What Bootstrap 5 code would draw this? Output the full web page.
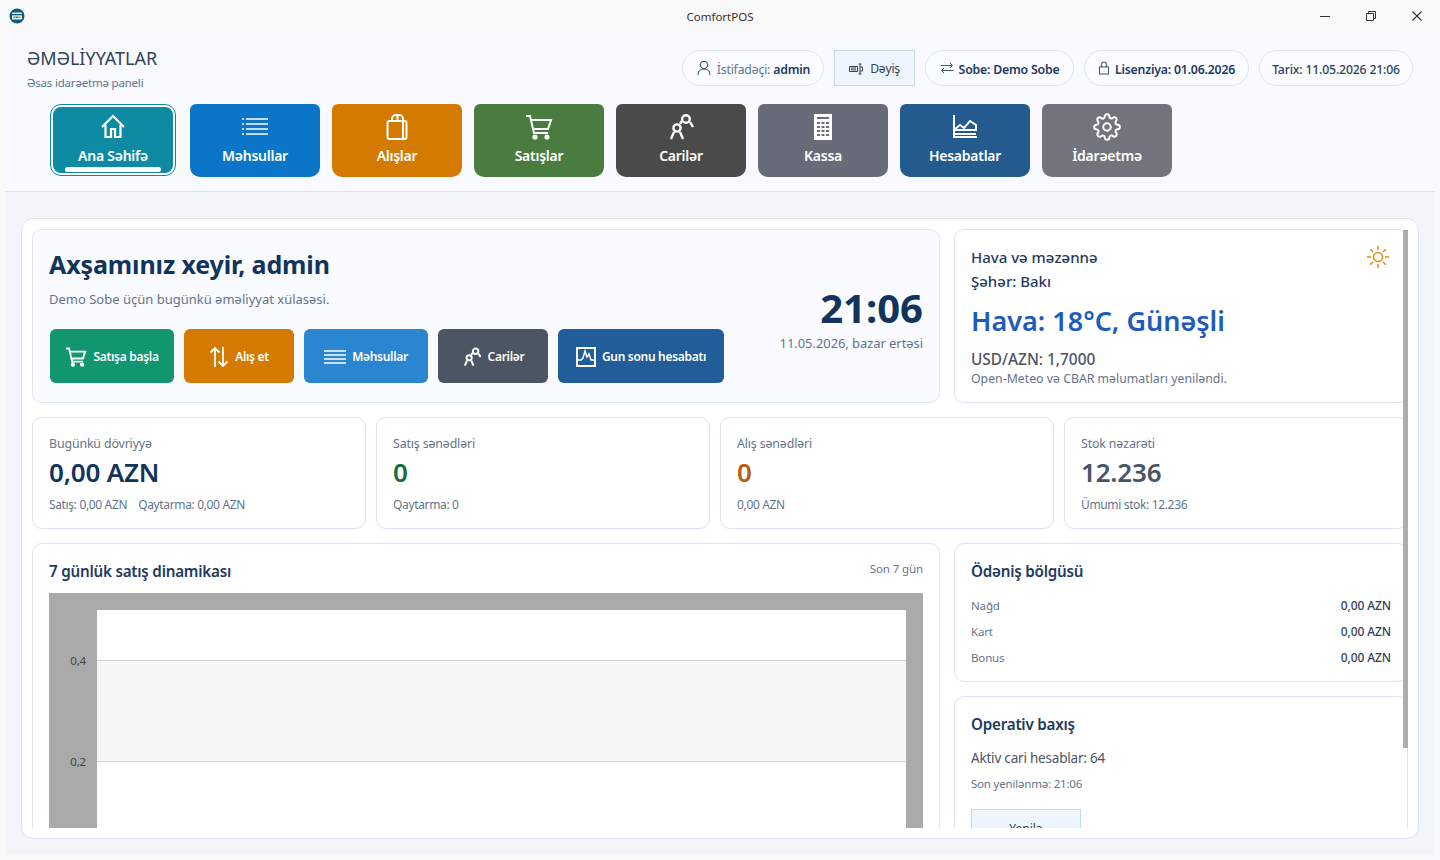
<!DOCTYPE html>
<html lang="en">
<head>
  <meta charset="UTF-8" />
  <title>ComfortPOS</title>
  <link rel="stylesheet" href="https://cdn.jsdelivr.net/npm/bootstrap@5.3.0/dist/css/bootstrap.min.css">
  <style>
    html, body { height: 860px; overflow: hidden; }
    body { font-family: "Noto Sans", "Open Sans", sans-serif; background: #f9f9f9; color: #334155; font-size: 13px; }
    .win-bar { height: 32px; position: relative; }
    .win-ico { position: absolute; left: 9px; top: 8px; }
    .win-title { font-size: 11.5px; color: #333; width: 100%; text-align: center; padding-top: 2px; }
    .win-ctl { position: absolute; right: 0; top: 0; height: 32px; }
    .win-ctl span { width: 46px; height: 32px; display: flex; align-items: center; justify-content: center; }
    .app { margin: 0 5px; height: 823px; background: #f3f5f9; }
    .top-area { background: #f8faff; height: 160px; border-bottom: 1px solid #dde4ee; }
    .head-row { padding: 14px 22px 0 22px; height: 72px; }
    .page-title { font-size: 18px; line-height: 24px; color: #334155; }
    .page-sub { font-size: 11.5px; line-height: 16px; color: #64748b; margin-top: 5px; letter-spacing: -.2px; }
    .pill-row { gap: 10px; margin-top: 4px; }
    .info-pill { height: 36px; border: 1px solid #dbe5f1; border-radius: 18px; background: #fbfcff; padding-top: 4px; font-size: 12.3px; letter-spacing: -.2px; color: #334155; gap: 5px; white-space: nowrap; }
    .info-pill svg { margin-top: -4px; }
    .info-pill .lbl { color: #64748b; }
    .info-pill b { font-weight: 600; color: #1e3a5f; }
    .pill-user { width: 142px; }
    .pill-shop { width: 149px; }
    .pill-lic { width: 165px; }
    .pill-when { width: 154px; }
    .pill-date { font-weight: 500; }
    .swap-btn { height: 36px; width: 81px; border: 1px solid #c9d9ea; background: #eef5fd; font-size: 12.2px; color: #334155; gap: 7px; letter-spacing: -.25px; padding-top: 2px; }
    .mod-row { padding-left: 45px; gap: 12px; height: 73px; }
    .mod-btn { width: 130px; height: 73px; color: #fff; border-radius: 6px 6px 10px 10px; font-size: 14px; font-weight: 600; letter-spacing: -.25px; gap: 5px; padding-top: 9px; line-height: 20px; }
    .mod-btn svg { width: 28px; height: 28px; }
    .mod-home { width: 124px; height: 70px; margin: 1px 3px 0 1px; background: #0e8ba3; border-radius: 10px; outline: 1px solid #0e8ba3; border: 2px solid #fff; position: relative; padding-top: 6px; }
    .mod-home::after { content: ""; position: absolute; left: 12px; right: 12px; bottom: 1px; height: 5px; border-radius: 3px; background: #fff; }
    .bg-blue-ish { background: #0b76c8; }
    .bg-amber-ish { background: #d57a00; }
    .bg-green-ish { background: #4a7c3f; }
    .bg-coal-ish { background: #4a4a4a; }
    .bg-slate-ish { background: #686b78; }
    .bg-navy-ish { background: #235b8e; }
    .bg-steel-ish { background: #71747d; }
    .outer-box { margin: 26px 16px 0 16px; height: 621px; background: #fff; border: 1px solid #dbe4ef; border-radius: 12px; padding: 10px; }
    .scroll-clip { height: 599px; overflow: hidden; position: relative; }
    .scroll-thumb { position: absolute; right: 0; top: 1px; width: 5px; height: 518px; background: #adadad; z-index: 3; }
    .main-grid { display: grid; grid-template-columns: 908px 454px; column-gap: 14px; }
    .panel { border: 1px solid #dde5f0; border-radius: 10px; background: #fff; }
    .hero { height: 174px; background: #f9fbff; padding: 16px; position: relative; }
    .hero h1 { font-size: 25px; font-weight: 700; color: #12345b; margin: 0; line-height: 36px; letter-spacing: -.12px; }
    .hero p { font-size: 13px; color: #64748b; margin: 8px 0 0; line-height: 18px; }
    .hero-acts { gap: 10px; margin: 21px 0 0 1px; }
    .act-btn { height: 54px; border-radius: 6px; color: #fff; font-size: 12px; font-weight: 600; gap: 6px; letter-spacing: -.3px; padding-top: 1px; }
    .act-w110 { width: 110px; }
    .act-w124 { width: 124px; }
    .act-w166 { width: 166px; }
    .hero-clock { position: absolute; right: 16px; top: 54px; text-align: right; }
    .clock-big { font-size: 40px; font-weight: 700; color: #12345b; line-height: 48px; }
    .clock-date { font-size: 13px; color: #64748b; line-height: 18px; margin-top: 2px; letter-spacing: -.07px; }
    .act-green { background: #12966f; }
    .act-blue { background: #2a86d0; }
    .act-slate { background: #4b5563; }
    .act-navy { background: #205d99; }
    .weather { height: 174px; padding: 15px 16px 16px; position: relative; }
    .weather .w1 { font-size: 15px; font-weight: 500; color: #1e3a5f; line-height: 24px; }
    .weather .w2 { font-size: 27px; font-weight: 600; color: #1f5bbd; line-height: 36px; margin-top: 10px; }
    .weather .w3 { font-size: 15.4px; font-weight: 500; color: #4b5563; line-height: 20px; margin-top: 11px; }
    .weather .w4 { font-size: 12.3px; color: #64748b; line-height: 18px; }
    .sun-ico { position: absolute; right: 17px; top: 15px; }
    .kpi-row { display: grid; grid-template-columns: 334px 334px 334px 344px; column-gap: 10px; margin: 14px 0; grid-column: 1 / -1; }
    .kpi { height: 112px; padding: 17px 16px 16px; }
    .kpi-cap { font-size: 12.4px; color: #64748b; line-height: 18px; letter-spacing: -.15px; }
    .kpi-num { font-size: 26px; font-weight: 600; line-height: 34px; margin-top: 2px; color: #12345b; letter-spacing: -.2px; }
    .kpi-foot { font-size: 12px; color: #64748b; line-height: 16px; margin-top: 8px; letter-spacing: -.35px; }
    .kpi-foot span + span { margin-left: 11px; }
    .tone-green { color: #146c43; }
    .tone-amber { color: #b45f10; }
    .tone-gray { color: #475569; }
    .chart-panel { height: 400px; padding: 16px; }
    .chart-head { height: 33px; }
    .chart-title { font-size: 15.2px; font-weight: 600; color: #1e3a5f; line-height: 22px; letter-spacing: -.22px; }
    .chart-note { font-size: 11.5px; color: #64748b; letter-spacing: -.1px; }
    .chart-gray { background: #aaa; height: 300px; padding: 17px 17px 0 48px; }
    .plot { background: #fff; height: 283px; position: relative; }
    .plot-band { position: absolute; left: 0; right: 0; top: 50px; height: 102px; background: #f7f7f7; border-top: 1px solid #d4d4d4; border-bottom: 1px solid #d4d4d4; }
    .tick { position: absolute; right: calc(100% + 11px); font-size: 11.5px; color: #444; line-height: 16px; letter-spacing: -.2px; }
    .tick-hi { top: 43px; }
    .tick-lo { top: 144px; }
    .side-stack { display: flex; flex-direction: column; gap: 14px; }
    .pay-panel { height: 139px; padding: 16px; }
    .pay-line { height: 26px; font-size: 11.5px; color: #64748b; letter-spacing: -.15px; }
    .pay-line b { font-weight: 500; color: #334155; font-size: 12px; letter-spacing: -.1px; }
    .pay-rows { margin-top: 11px; }
    .oper-panel { height: 200px; padding: 16px; }
    .oper-line { font-size: 13.5px; color: #4b5563; line-height: 20px; margin-top: 13px; letter-spacing: -.2px; }
    .oper-sub { font-size: 11.5px; color: #64748b; line-height: 16px; margin-top: 8px; letter-spacing: -.2px; }
    .refresh-btn { width: 110px; height: 40px; border: 1px solid #c9d9ea; background: #eef5fd; font-size: 12px; color: #334155; margin-top: 17px; display: flex; justify-content: center; align-items: center; }
  </style>
</head>
<body>

<!-- Window bar -->
<div class="win-bar d-flex align-items-center">
  <svg class="win-ico" width="16" height="16" viewBox="0 0 16 16"><circle cx="8" cy="8" r="7.5" fill="#0f5c7a"/><rect x="3" y="4.5" width="10" height="7" rx="1" fill="#e8f4f8"/><rect x="3" y="6" width="10" height="1.3" fill="#0f5c7a"/><rect x="4.5" y="8.5" width="2" height="1.5" fill="#2a86d0"/><rect x="7" y="8.5" width="2" height="1.5" fill="#12966f"/><rect x="9.5" y="8.5" width="2" height="1.5" fill="#d57a00"/></svg>
  <div class="win-title">ComfortPOS</div>
  <div class="win-ctl d-flex">
    <span><svg width="12" height="12" viewBox="0 0 12 12"><path d="M1 6.5h10" stroke="#333" fill="none"/></svg></span>
    <span><svg width="12" height="12" viewBox="0 0 12 12"><path d="M1.5 3.5h7v7h-7zM3.5 3.5v-2h7v7h-2" stroke="#333" fill="none"/></svg></span>
    <span><svg width="12" height="12" viewBox="0 0 12 12"><path d="M1.5 1.5l9 9M10.5 1.5l-9 9" stroke="#333" stroke-width="1.1" fill="none"/></svg></span>
  </div>
</div>

<div class="app">
  <div class="top-area">
    <div class="head-row d-flex justify-content-between">
      <div>
        <div class="page-title">ƏMƏLİYYATLAR</div>
        <div class="page-sub">Əsas idarəetmə paneli</div>
      </div>
      <div class="pill-row d-flex align-items-start">
        <div class="info-pill pill-user d-flex align-items-center justify-content-center">
          <svg width="16" height="16" viewBox="0 0 16 16" fill="none" stroke="#475a78" stroke-width="1.1"><circle cx="8" cy="5" r="3.6"/><path d="M2 15c0-4 2.5-6 6-6s6 2 6 6"/></svg>
          <span><span class="lbl">İstifadəçi:</span> <b>admin</b></span>
        </div>
        <div class="swap-btn d-flex align-items-center justify-content-center">
          <svg width="14" height="12" viewBox="0 0 14 12" fill="none" stroke="#334155"><path d="M.5 3.5h8v5h-8zM2 5h5M2 6.8h5M11 1v10M9.500 1h3M9.500 11h3M11 4h2.500v4H11"/></svg>
          <span>Dəyiş</span>
        </div>
        <div class="info-pill pill-shop d-flex align-items-center justify-content-center">
          <svg width="14" height="12" viewBox="0 0 14 12" fill="none" stroke="#475a78"><path d="M.5 3.5h12M10 1l2.500 2.500L10 6M13.500 8.500h-12M4 6L1.500 8.500 4 11"/></svg>
          <b>Sobe: Demo Sobe</b>
        </div>
        <div class="info-pill pill-lic d-flex align-items-center justify-content-center">
          <svg width="12" height="14" viewBox="0 0 12 14" fill="none" stroke="#475a78" stroke-width="1.1"><rect x="1.500" y="6" width="9" height="7"/><path d="M3.500 6V3.500a2.500 2.500 0 0 1 5 0V6"/></svg>
          <b>Lisenziya: 01.06.2026</b>
        </div>
        <div class="info-pill pill-when d-flex align-items-center justify-content-center">
          <span class="pill-date">Tarix: 11.05.2026 21:06</span>
        </div>
      </div>
    </div>
    <div class="mod-row d-flex">
      <div class="mod-btn mod-home d-flex flex-column align-items-center">
        <svg viewBox="0 0 28 28" fill="none" stroke="#fff" stroke-width="2.200"><path d="M3 14L14 3l11 11M6.500 12v12h5.500v-8h4v8h5.500V12"/></svg>
        <span>Ana Səhifə</span>
      </div>
      <div class="mod-btn bg-blue-ish d-flex flex-column align-items-center">
        <svg viewBox="0 0 28 28" fill="none" stroke="#fff" stroke-width="1.700"><path d="M1 6h2M5 6h22M1 11h2M5 11h22M1 16h2M5 16h22M1 21h2M5 21h22"/></svg>
        <span>Məhsullar</span>
      </div>
      <div class="mod-btn bg-amber-ish d-flex flex-column align-items-center">
        <svg viewBox="0 0 28 28" fill="none" stroke="#fff" stroke-width="2"><rect x="4.500" y="8" width="19" height="18" rx="2"/><path d="M20 8v18M9 8V6a4 4 0 0 1 4-4h3a4 4 0 0 1 4 4v2M14.500 2.500V8"/></svg>
        <span>Alışlar</span>
      </div>
      <div class="mod-btn bg-green-ish d-flex flex-column align-items-center">
        <svg viewBox="0 0 28 28" fill="none" stroke="#fff" stroke-width="2"><path d="M1 3h4l4 17h14M6 7h20l-3 9H8"/><circle cx="10" cy="24" r="1.600" fill="#fff"/><circle cx="22" cy="24" r="1.600" fill="#fff"/></svg>
        <span>Satışlar</span>
      </div>
      <div class="mod-btn bg-coal-ish d-flex flex-column align-items-center">
        <svg viewBox="0 0 28 28" fill="none" stroke="#fff" stroke-width="2.400"><circle cx="19" cy="6" r="3.800"/><circle cx="10" cy="15" r="3.600"/><path d="M4 26l3-7M16 26l-3-7M23 9l3 5M15 8l-2 3"/></svg>
        <span>Carilər</span>
      </div>
      <div class="mod-btn bg-slate-ish d-flex flex-column align-items-center">
        <svg viewBox="0 0 28 28"><rect x="5" y="1" width="18" height="26" fill="#fff"/><rect x="8" y="4" width="12" height="2" fill="#686b78"/><g fill="#686b78"><rect x="8" y="9" width="3" height="2"/><rect x="12.500" y="9" width="3" height="2"/><rect x="17" y="9" width="3" height="2"/><rect x="8" y="13" width="3" height="2"/><rect x="12.500" y="13" width="3" height="2"/><rect x="17" y="13" width="3" height="2"/><rect x="8" y="17" width="3" height="2"/><rect x="12.500" y="17" width="3" height="2"/><rect x="17" y="17" width="3" height="2"/><rect x="8" y="21" width="3" height="2"/><rect x="12.500" y="21" width="3" height="2"/><rect x="17" y="21" width="3" height="2"/></g></svg>
        <span>Kassa</span>
      </div>
      <div class="mod-btn bg-navy-ish d-flex flex-column align-items-center">
        <svg viewBox="0 0 28 28" fill="none" stroke="#fff" stroke-width="2"><path d="M3 2v22h23M3 17l6-5 4 3 6-7 6 4v5H3M3 21h22"/></svg>
        <span>Hesabatlar</span>
      </div>
      <div class="mod-btn bg-steel-ish d-flex flex-column align-items-center">
        <svg viewBox="0 0 24 24" fill="none" stroke="#fff" stroke-width="1.700"><circle cx="12" cy="12" r="3.200"/><path d="M19.400 15a1.650 1.650 0 0 0 .33 1.820l.06.06a2 2 0 0 1 0 2.830 2 2 0 0 1-2.830 0l-.06-.06a1.650 1.650 0 0 0-1.820-.33 1.650 1.650 0 0 0-1 1.510V21a2 2 0 0 1-2 2 2 2 0 0 1-2-2v-.09A1.650 1.650 0 0 0 9 19.400a1.650 1.650 0 0 0-1.820.33l-.06.06a2 2 0 0 1-2.830 0 2 2 0 0 1 0-2.830l.06-.06a1.650 1.650 0 0 0 .33-1.820 1.650 1.650 0 0 0-1.510-1H3a2 2 0 0 1-2-2 2 2 0 0 1 2-2h.09A1.650 1.650 0 0 0 4.600 9a1.650 1.650 0 0 0-.33-1.820l-.06-.06a2 2 0 0 1 0-2.830 2 2 0 0 1 2.830 0l.06.06a1.650 1.650 0 0 0 1.820.33H9a1.650 1.650 0 0 0 1-1.510V3a2 2 0 0 1 2-2 2 2 0 0 1 2 2v.09a1.650 1.650 0 0 0 1 1.510 1.650 1.650 0 0 0 1.820-.33l.06-.06a2 2 0 0 1 2.830 0 2 2 0 0 1 0 2.830l-.06.06a1.650 1.650 0 0 0-.33 1.820V9a1.650 1.650 0 0 0 1.510 1H21a2 2 0 0 1 2 2 2 2 0 0 1-2 2h-.09a1.650 1.650 0 0 0-1.510 1z"/></svg>
        <span>İdarəetmə</span>
      </div>
    </div>
  </div>

  <div class="outer-box">
    <div class="scroll-clip">
      <div class="scroll-thumb"></div>
      <div class="main-grid">
        <div class="panel hero">
          <h1>Axşamınız xeyir, admin</h1>
          <p>Demo Sobe üçün bugünkü əməliyyat xülasəsi.</p>
          <div class="hero-acts d-flex">
            <div class="act-btn act-green act-w124 d-flex align-items-center justify-content-center">
              <svg width="22" height="20" viewBox="0 0 28 26" fill="none" stroke="#fff" stroke-width="2.400"><path d="M1 2h4l4 17h14M6 6h20l-3 9H8"/><circle cx="10" cy="23" r="1.600" fill="#fff"/><circle cx="22" cy="23" r="1.600" fill="#fff"/></svg>
              <span>Satışa başla</span>
            </div>
            <div class="act-btn bg-amber-ish act-w110 d-flex align-items-center justify-content-center">
              <svg width="20" height="22" viewBox="0 0 20 22" fill="none" stroke="#fff" stroke-width="1.800"><path d="M6 21V2M1.500 6.500L6 2l4.500 4.500M14 1v19M9.500 15.500L14 20l4.500-4.500"/></svg>
              <span>Alış et</span>
            </div>
            <div class="act-btn act-blue act-w124 d-flex align-items-center justify-content-center">
              <svg width="22" height="14" viewBox="0 0 22 14" fill="none" stroke="#fff" stroke-width="1.400"><path d="M0 1h22M0 5h22M0 9h22M0 13h22"/></svg>
              <span>Məhsullar</span>
            </div>
            <div class="act-btn act-slate act-w110 d-flex align-items-center justify-content-center">
              <svg width="20" height="20" viewBox="0 0 28 28" fill="none" stroke="#fff" stroke-width="2.800"><circle cx="19" cy="6" r="3.800"/><circle cx="10" cy="15" r="3.600"/><path d="M4 26l3-7M16 26l-3-7M23 9l3 5M15 8l-2 3"/></svg>
              <span>Carilər</span>
            </div>
            <div class="act-btn act-navy act-w166 d-flex align-items-center justify-content-center">
              <svg width="20" height="20" viewBox="0 0 20 20" fill="none" stroke="#fff"><rect x="1" y="1" width="18" height="18" stroke-width="2"/><path d="M2 13h3l2-2 2-7 2 6 2-3 2 6h3" stroke-width="1.500"/></svg>
              <span>Gun sonu hesabatı</span>
            </div>
          </div>
          <div class="hero-clock">
            <div class="clock-big">21:06</div>
            <div class="clock-date">11.05.2026, bazar ertəsi</div>
          </div>
        </div>

        <div class="panel weather">
          <div class="w1">Hava və məzənnə</div>
          <div class="w1">Şəhər: Bakı</div>
          <div class="w2">Hava: 18°C, Günəşli</div>
          <div class="w3">USD/AZN: 1,7000</div>
          <div class="w4">Open-Meteo və CBAR məlumatları yeniləndi.</div>
          <svg class="sun-ico" width="24" height="24" viewBox="0 0 24 24" fill="none" stroke="#e08a14" stroke-width="1.500"><circle cx="12" cy="12" r="4.500"/><path d="M12 1v4M12 19v4M1 12h4M19 12h4M4.200 4.200l2.800 2.800M17 17l2.800 2.800M4.200 19.800L7 17M17 7l2.800-2.800"/></svg>
        </div>

        <div class="kpi-row">
          <div class="panel kpi">
            <div class="kpi-cap">Bugünkü dövriyyə</div>
            <div class="kpi-num">0,00 AZN</div>
            <div class="kpi-foot"><span>Satış: 0,00 AZN</span><span>Qaytarma: 0,00 AZN</span></div>
          </div>
          <div class="panel kpi">
            <div class="kpi-cap">Satış sənədləri</div>
            <div class="kpi-num tone-green">0</div>
            <div class="kpi-foot">Qaytarma: 0</div>
          </div>
          <div class="panel kpi">
            <div class="kpi-cap">Alış sənədləri</div>
            <div class="kpi-num tone-amber">0</div>
            <div class="kpi-foot">0,00 AZN</div>
          </div>
          <div class="panel kpi">
            <div class="kpi-cap">Stok nəzarəti</div>
            <div class="kpi-num tone-gray">12.236</div>
            <div class="kpi-foot">Ümumi stok: 12.236</div>
          </div>
        </div>

        <div class="panel chart-panel">
          <div class="chart-head d-flex justify-content-between">
            <div class="chart-title">7 günlük satış dinamikası</div>
            <div class="chart-note">Son 7 gün</div>
          </div>
          <div class="chart-gray">
            <div class="plot">
              <div class="plot-band"></div>
              <div class="tick tick-hi">0,4</div>
              <div class="tick tick-lo">0,2</div>
            </div>
          </div>
        </div>

        <div class="side-stack">
          <div class="panel pay-panel">
            <div class="chart-title">Ödəniş bölgüsü</div>
            <div class="pay-rows">
              <div class="pay-line d-flex justify-content-between align-items-center"><span>Nağd</span><b>0,00 AZN</b></div>
              <div class="pay-line d-flex justify-content-between align-items-center"><span>Kart</span><b>0,00 AZN</b></div>
              <div class="pay-line d-flex justify-content-between align-items-center"><span>Bonus</span><b>0,00 AZN</b></div>
            </div>
          </div>
          <div class="panel oper-panel">
            <div class="chart-title">Operativ baxış</div>
            <div class="oper-line">Aktiv cari hesablar: 64</div>
            <div class="oper-sub">Son yenilənmə: 21:06</div>
            <div class="refresh-btn">Yenilə</div>
          </div>
        </div>
      </div>
    </div>
  </div>
</div>

</body>
</html>
